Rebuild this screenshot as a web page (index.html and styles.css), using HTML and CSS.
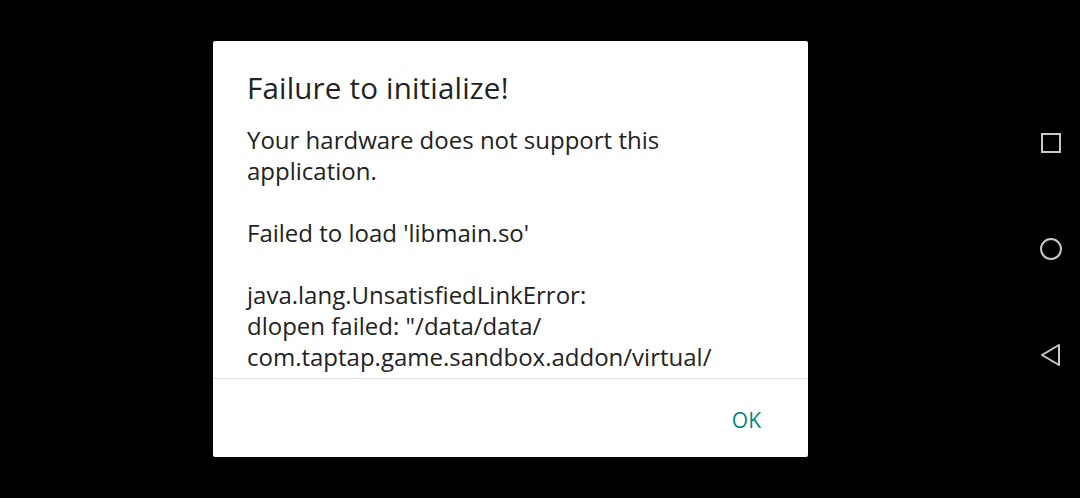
FILE: index.html
```html
<!DOCTYPE html>
<html>
<head>
<meta charset="utf-8">
<link rel="stylesheet" href="styles.css">
</head>
<body>
<div class="screen">
  <main class="stage">
    <div class="dialog">
      <h1 class="title">Failure to initialize!</h1>
      <div class="content">
        <p>Your hardware does not support this application.</p>
        <p>Failed to load 'libmain.so'</p>
        <p>java.lang.UnsatisfiedLinkError:<br>dlopen failed: "/data/data/<br>com.taptap.game.sandbox.addon/virtual/<br>data/app/com.taptap.game/lib/arm64/libmain.so"</p>
      </div>
      <div class="actions">
        <button class="ok">OK</button>
      </div>
    </div>
  </main>
  <nav class="navbar">
    <svg class="nav-icon" width="24" height="24" viewBox="0 0 24 24"><rect x="3" y="3" width="18" height="18" fill="none" stroke="#c8c8c8" stroke-width="2"/></svg>
    <svg class="nav-icon" width="24" height="24" viewBox="0 0 24 24"><circle cx="12" cy="12" r="10" fill="none" stroke="#c8c8c8" stroke-width="2"/></svg>
    <svg class="nav-icon" width="24" height="24" viewBox="0 0 24 24"><path d="M20 2 L3 12 L20 22 Z" fill="none" stroke="#c8c8c8" stroke-width="2" stroke-linejoin="round"/></svg>
  </nav>
</div>
</body>
</html>
```
FILE: styles.css
```css
html, body {
  margin: 0;
  padding: 0;
  background: #000;
  height: 100%;
}
.screen {
  display: flex;
  width: 1080px;
  height: 498px;
}
.stage {
  width: 1021px;
  display: flex;
  align-items: center;
  justify-content: center;
}
.dialog {
  width: 595px;
  height: 416px;
  background: #fff;
  border-radius: 2px;
  display: flex;
  flex-direction: column;
  font-family: "Open Sans", "Noto Sans", sans-serif;
  color: #222;
}
.title {
  margin: 0;
  padding: 27px 34px 0;
  font-size: 29.5px;
  font-weight: 400;
  line-height: 40px;
  letter-spacing: 0.2px;
}
.content {
  flex: 1;
  overflow: hidden;
  padding: 16px 34px 0;
  font-size: 24px;
  line-height: 31px;
  border-bottom: 1px solid #e2e2e2;
}
.content p {
  margin: 0 0 31px;
}
.actions {
  height: 78px;
  display: flex;
  justify-content: flex-end;
  align-items: center;
  padding-right: 47px;
  padding-top: 3px;
  box-sizing: border-box;
}
.ok {
  background: none;
  border: none;
  font-family: "Open Sans", "Noto Sans", sans-serif;
  font-size: 21px;
  color: #00897b;
  padding: 0;
}
.navbar {
  width: 59px;
  display: flex;
  flex-direction: column;
  align-items: center;
  justify-content: center;
  gap: 82px;
}
.nav-icon {
  display: block;
}
```
